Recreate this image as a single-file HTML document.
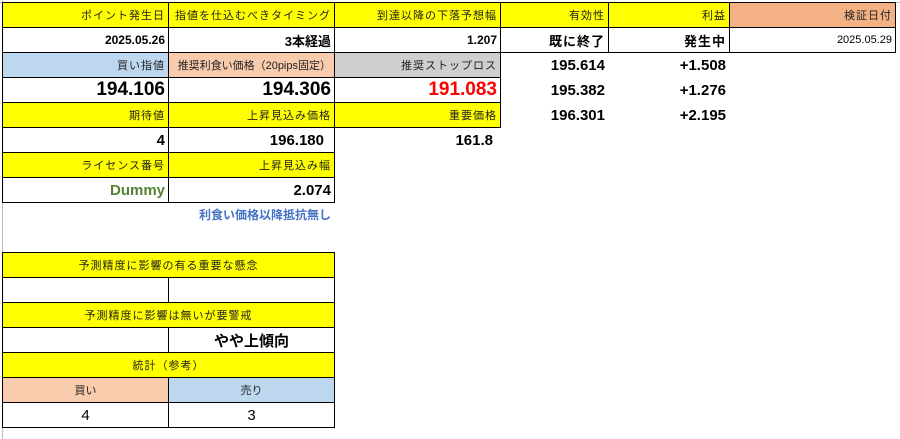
<!DOCTYPE html>
<html><head><meta charset="utf-8"><style>
body{margin:0;width:900px;height:439px;background:#fff;position:relative;overflow:hidden;font-family:"Liberation Sans","Noto Sans CJK JP",sans-serif;}
.c{position:absolute;box-sizing:border-box;border:1px solid #000;display:flex;align-items:center;justify-content:flex-end;padding-right:3px;font-size:11px;color:#222;white-space:nowrap;}
.h{letter-spacing:1px}
.n{position:absolute;box-sizing:border-box;display:flex;align-items:center;justify-content:flex-end;padding-right:3px;white-space:nowrap;font-weight:bold;}
.y{background:#ffff00}.ctr{justify-content:center;padding:0}
</style></head><body>
<div style="position:absolute;left:0;top:2px;width:900px;height:1px;background:#bbb"></div>
<div style="position:absolute;left:2px;top:0;width:1px;height:439px;background:#bbb"></div>

<div class="c y h" style="left:2px;top:2px;width:167px;height:26px">ポイント発生日</div>
<div class="c y h" style="left:168px;top:2px;width:167px;height:26px">指値を仕込むべきタイミング</div>
<div class="c y h" style="left:334px;top:2px;width:167px;height:26px">到達以降の下落予想幅</div>
<div class="c y h" style="left:500px;top:2px;width:109px;height:26px">有効性</div>
<div class="c y h" style="left:608px;top:2px;width:122px;height:26px">利益</div>
<div class="c h" style="left:729px;top:2px;width:167px;height:26px;background:#f4b183">検証日付</div>

<div class="c" style="left:2px;top:27px;width:167px;height:26px;font-weight:bold;font-size:12px;color:#000">2025.05.26</div>
<div class="c" style="left:168px;top:27px;width:167px;height:26px;font-weight:bold;font-size:13px;color:#000">3本経過</div>
<div class="c" style="left:334px;top:27px;width:167px;height:26px;font-weight:bold;font-size:12px;color:#000">1.207</div>
<div class="c h" style="left:500px;top:27px;width:109px;height:26px;font-weight:bold;font-size:13px;color:#000">既に終了</div>
<div class="c h" style="left:608px;top:27px;width:122px;height:26px;font-weight:bold;font-size:13px;color:#000">発生中</div>
<div class="c" style="left:729px;top:27px;width:167px;height:26px;font-size:11px;color:#000">2025.05.29</div>

<div class="c h" style="left:2px;top:52px;width:167px;height:26px;background:#bdd7ee">買い指値</div>
<div class="c" style="left:168px;top:52px;width:167px;height:26px;background:#f8cbad">推奨利食い価格（20pips固定）</div>
<div class="c h" style="left:334px;top:52px;width:167px;height:26px;background:#d0cece">推奨ストップロス</div>
<div class="n" style="left:500px;top:52px;width:108px;height:26px;font-size:15px">195.614</div>
<div class="n" style="left:608px;top:52px;width:121px;height:26px;font-size:15px">+1.508</div>

<div class="c" style="left:2px;top:77px;width:167px;height:26px;font-weight:bold;font-size:19px;color:#000">194.106</div>
<div class="c" style="left:168px;top:77px;width:167px;height:26px;font-weight:bold;font-size:19px;color:#000">194.306</div>
<div class="c" style="left:334px;top:77px;width:167px;height:26px;font-weight:bold;font-size:19px;color:#ff0000">191.083</div>
<div class="n" style="left:500px;top:77px;width:108px;height:26px;font-size:15px">195.382</div>
<div class="n" style="left:608px;top:77px;width:121px;height:26px;font-size:15px">+1.276</div>

<div class="c y h" style="left:2px;top:102px;width:167px;height:26px">期待値</div>
<div class="c y h" style="left:168px;top:102px;width:167px;height:26px">上昇見込み価格</div>
<div class="c y h" style="left:334px;top:102px;width:167px;height:26px">重要価格</div>
<div class="n" style="left:500px;top:102px;width:108px;height:26px;font-size:15px">196.301</div>
<div class="n" style="left:608px;top:102px;width:121px;height:26px;font-size:15px">+2.195</div>

<div class="c" style="left:2px;top:127px;width:167px;height:26px;font-weight:bold;font-size:15px;color:#000">4</div>
<div class="c" style="left:168px;top:127px;width:167px;height:26px;font-weight:bold;font-size:15px;color:#000;padding-right:10px">196.180</div>
<div class="n" style="left:334px;top:127px;width:167px;height:26px;font-size:15px;padding-right:8px">161.8</div>

<div class="c y h" style="left:2px;top:152px;width:167px;height:26px">ライセンス番号</div>
<div class="c y h" style="left:168px;top:152px;width:167px;height:26px">上昇見込み幅</div>

<div class="c" style="left:2px;top:177px;width:167px;height:26px;font-weight:bold;font-size:15px;color:#548235">Dummy</div>
<div class="c" style="left:168px;top:177px;width:167px;height:26px;font-weight:bold;font-size:15px;color:#000">2.074</div>
<div class="n" style="left:168px;top:202px;width:166px;height:24px;font-size:12px;color:#4472c4;font-family:'Noto Sans CJK JP',sans-serif">利食い価格以降抵抗無し</div>

<div class="c y ctr h" style="left:2px;top:252px;width:333px;height:26px">予測精度に影響の有る重要な懸念</div>
<div class="c" style="left:2px;top:277px;width:167px;height:26px"></div>
<div class="c" style="left:168px;top:277px;width:167px;height:26px"></div>
<div class="c y ctr h" style="left:2px;top:302px;width:333px;height:26px">予測精度に影響は無いが要警戒</div>
<div class="c" style="left:2px;top:327px;width:167px;height:26px"></div>
<div class="c ctr" style="left:168px;top:327px;width:167px;height:26px;font-weight:bold;font-size:15px;color:#000">やや上傾向</div>
<div class="c y ctr h" style="left:2px;top:352px;width:333px;height:26px">統計（参考）</div>
<div class="c ctr" style="left:2px;top:377px;width:167px;height:26px;background:#f8cbad">買い</div>
<div class="c ctr" style="left:168px;top:377px;width:167px;height:26px;background:#bdd7ee">売り</div>
<div class="c ctr" style="left:2px;top:402px;width:167px;height:26px;font-size:15px;color:#000">4</div>
<div class="c ctr" style="left:168px;top:402px;width:167px;height:26px;font-size:15px;color:#000">3</div>
</body></html>
